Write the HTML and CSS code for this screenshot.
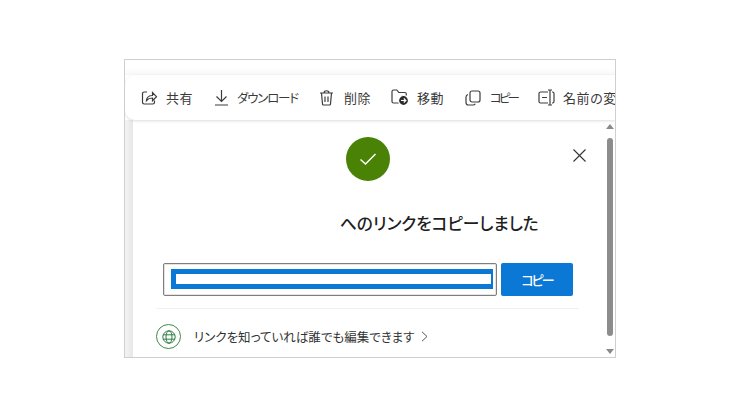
FILE: index.html
```html
<!DOCTYPE html>
<html lang="ja">
<head>
<meta charset="utf-8">
<title>リンクをコピー</title>
<link rel="stylesheet" href="styles.css">
</head>
<body>
<div class="frame">
  <div class="top-strip"></div>
  <div class="toolbar">
    <div class="tool tool-share">
      <svg class="icon" width="17" height="17" viewBox="0 0 17 17"><path d="M6 3H3.200C2.200 3 1.500 3.700 1.500 4.700v8.600c0 1 .7 1.700 1.700 1.700h8.600c1 0 1.700-.7 1.700-1.700V11.500M5.500 11.500c.3-3 2.600-5 6-5V3.500l4 4.200-4 4V9c-2.500 0-4.500.7-6 2.500z"/></svg>
      <span>共有</span>
    </div>
    <div class="tool tool-down">
      <svg class="icon" width="15" height="17" viewBox="0 0 15 17"><path d="M7.500 1v11M2.500 7.500l5 5 5-5M1 16h13"/></svg>
      <span>ダウンロード</span>
    </div>
    <div class="tool tool-del">
      <svg class="icon" width="15" height="17" viewBox="0 0 15 17"><path d="M1 4h13M5 4c0-3 5-3 5 0M2.500 4l1 11c0 .6.500 1 1 1h6c.5 0 1-.4 1-1l1-11M6 7.500v5.500M9 7.500v5.500"/></svg>
      <span>削除</span>
    </div>
    <div class="tool tool-move">
      <svg class="icon" width="18" height="17" viewBox="0 0 18 17"><path d="M8 14H2.500c-.8 0-1.500-.7-1.500-1.500v-10C1 1.700 1.700 1 2.500 1h3.300l2 2.500h6c.8 0 1.500.7 1.500 1.500v1.500"/><circle class="fill" cx="12.500" cy="11.500" r="5"/><path class="inv" d="M10 11.500h4.500M12.800 9.500l2 2-2 2"/></svg>
      <span>移動</span>
    </div>
    <div class="tool tool-copy">
      <svg class="icon" width="16" height="16" viewBox="0 0 16 16"><rect x="5" y="1" width="10" height="11" rx="2"/><path d="M3 4.500C1.800 5 1 5.800 1 7v5.500C1 14 2.200 15 3.500 15H8c1 0 1.800-.5 2.300-1.300"/></svg>
      <span>コピー</span>
    </div>
    <div class="tool tool-name">
      <svg class="icon" width="17" height="17" viewBox="0 0 17 17"><path d="M10 3H2.500C1.700 3 1 3.700 1 4.500v8c0 .8.700 1.500 1.500 1.500H10M14 3h.5c.8 0 1.500.7 1.500 1.500v8c0 .8-.7 1.500-1.500 1.500H14M12 1v15M10 1h4M10 16h4M4 8.500h5"/></svg>
      <span>名前の変更</span>
    </div>
  </div>
  <div class="main">
    <div class="gutter"></div>
    <div class="panel">
      <div class="success">
        <svg width="18" height="14" viewBox="0 0 18 14"><path d="M1.500 7.500l5 4.500L16.500 2"/></svg>
      </div>
      <button class="close" aria-label="閉じる">
        <svg width="13" height="13" viewBox="0 0 13 13"><path d="M.5.500l12 12M12.500.500l-12 12"/></svg>
      </button>
      <h1 class="heading">へのリンクをコピーしました</h1>
      <div class="link-row">
        <div class="link-box"><div class="selection"><div class="selection-inner"></div></div></div>
        <div class="copy-btn">コピー</div>
      </div>
      <div class="divider"></div>
      <div class="perm">
        <span class="globe">
          <svg width="14" height="14" viewBox="0 0 14 14"><circle cx="7" cy="7" r="6.200"/><ellipse cx="7" cy="7" rx="3" ry="6.200"/><path d="M1 4.800h12M1 9.200h12"/></svg>
        </span>
        <span class="perm-text">リンクを知っていれば誰でも編集できます</span>
        <svg class="chev" width="7" height="11" viewBox="0 0 7 11"><path d="M1 .8l5 4.700-5 4.700"/></svg>
      </div>
    </div>
    <div class="scrollbar">
      <div class="arrow-up"></div>
      <div class="thumb"></div>
      <div class="arrow-down"></div>
    </div>
  </div>
</div>
</body>
</html>
```
FILE: styles.css
```css
* { box-sizing: border-box; }
html, body { margin: 0; background: #fff; }
body {
  width: 740px;
  height: 417px;
  padding: 59px 124px;
  overflow: hidden;
  font-family: "Noto Sans CJK JP", "Noto Sans", sans-serif;
  font-feature-settings: "palt";
  color: #2b2b2b;
}
.frame {
  width: 492px;
  height: 299px;
  border: 1px solid #cfcfcf;
  display: flex;
  flex-direction: column;
  overflow: hidden;
  position: relative;
}
.top-strip {
  height: 15px;
  flex: none;
  background: linear-gradient(#fff 0, #fff 8px, #f7f7f7 15px);
}
.toolbar {
  height: 45px;
  flex: none;
  display: flex;
  align-items: center;
  padding-left: 16px;
  background: #fff;
  border-radius: 10px 0 0 10px;
  box-shadow: 0 1px 3px rgba(0,0,0,.14);
  white-space: nowrap;
  position: relative;
  z-index: 1;
  font-size: 12.500px;
  color: #3a3a3a;
}
.tool { display: flex; align-items: center; flex: none; }
.tool-share { gap: 8px; width: 73px; }
.tool-down { gap: 8px; width: 105px; }
.tool-down span { letter-spacing: -1.200px; }
.tool-del { gap: 10px; width: 72px; }
.tool-move { gap: 8px; width: 74px; }
.tool-copy { gap: 9px; width: 73px; }
.tool-copy span { letter-spacing: -3px; }
.tool-name { gap: 8px; }
.tool-share span, .tool-del span, .tool-move span, .tool-name span { font-size: 13px; letter-spacing: .6px; }
.icon { fill: none; stroke: #3c3c3c; stroke-width: 1.200; flex: none; }
.icon .fill { fill: #2b2b2b; stroke: #fff; }
.icon .inv { stroke: #fff; stroke-width: 1.200; }
.main { flex: 1; display: flex; min-height: 0; }
.gutter {
  width: 8px;
  flex: none;
  background: linear-gradient(90deg, #f4f4f4, #e6e6e6);
}
.panel {
  flex: 1;
  position: relative;
  background: #fff;
  padding: 17px 24px 0 23px;
  display: flex;
  flex-direction: column;
}
.success {
  width: 44px;
  height: 44px;
  border-radius: 50%;
  background: #498205;
  align-self: flex-start;
  margin-left: 190px;
  display: flex;
  align-items: center;
  justify-content: center;
}
.success svg { fill: none; stroke: #fff; stroke-width: 1.500; }
.close {
  position: absolute;
  top: 29px;
  right: 17px;
  padding: 0;
  width: 13px;
  height: 13px;
  border: 0;
  background: none;
  display: block;
}
.close svg { display: block; fill: none; stroke: #333; stroke-width: 1.100; }
.heading {
  margin: 30px 0 0 184px;
  font-size: 16.650px;
  line-height: 24px;
  font-weight: 500;
  color: #1f1f1f;
  white-space: nowrap;
}
.link-row {
  display: flex;
  gap: 4px;
  margin: 28px 0 0 7px;
  height: 33px;
}
.link-box {
  width: 334px;
  border: 1px solid #7f7f7f;
  border-radius: 2px;
  padding: 5px 3px 6px 7px;
  box-shadow: 0 0 0 1px #e4e4e4 inset;
}
.selection {
  height: 20px;
  background: #0a78d4;
  padding: 5px 2px 5px 5px;
}
.selection-inner { height: 10px; background: #fff; }
.copy-btn {
  width: 72px;
  background: #0a78d4;
  border-radius: 2px;
  color: #fff;
  font-size: 13px;
  font-weight: 500;
  letter-spacing: -2px;
  display: flex;
  align-items: center;
  justify-content: center;
}
.divider { height: 1px; background: #f0f0f0; margin: 12px 0 0 0; }
.perm {
  display: flex;
  align-items: center;
  margin-top: 15px;
  height: 25px;
}
.globe {
  width: 25px;
  height: 25px;
  border: 1px solid #3f8a4c;
  border-radius: 50%;
  display: flex;
  align-items: center;
  justify-content: center;
  flex: none;
}
.globe svg { fill: none; stroke: #2e7d46; stroke-width: 1; }
.perm-text {
  margin-left: 13px;
  font-size: 12.500px;
  color: #333;
  white-space: nowrap;
}
.chev { margin-left: 6px; fill: none; stroke: #555; stroke-width: 1; flex: none; }
.scrollbar {
  width: 12px;
  flex: none;
  background: #fff;
  display: flex;
  flex-direction: column;
  align-items: center;
  padding: 4px 0 0 1px;
}
.arrow-up, .arrow-down { width: 0; height: 0; border-left: 4px solid transparent; border-right: 4px solid transparent; }
.arrow-up { border-bottom: 5px solid #8a8a8a; }
.arrow-down { border-top: 5px solid #8a8a8a; margin-top: 13px; }
.thumb { width: 6px; height: 198px; margin-top: 9px; background: #8c8c8c; border-radius: 3px; }
```
